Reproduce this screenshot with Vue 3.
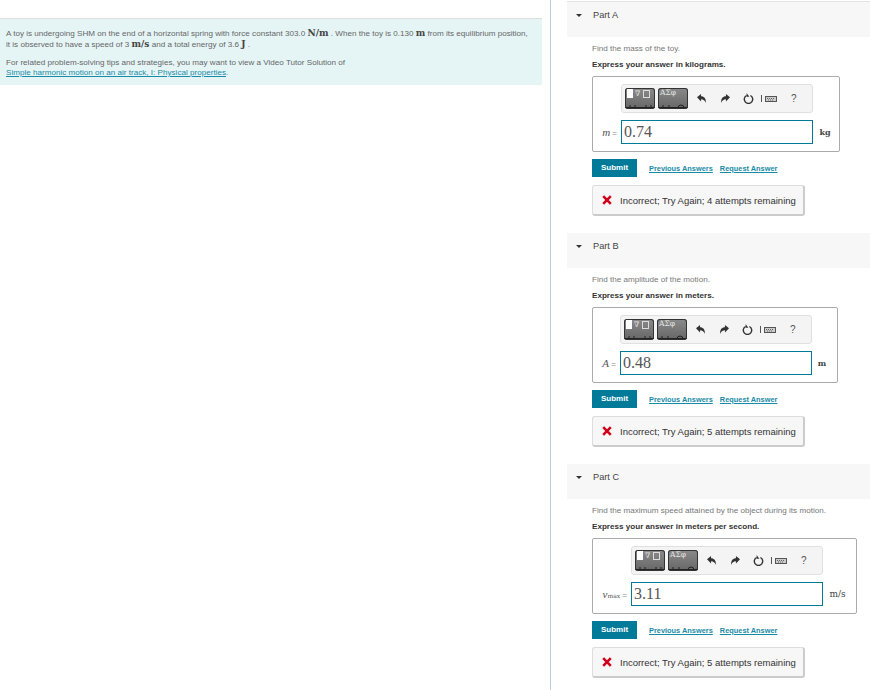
<template>
  <div class="page">
    <div class="left">
      <div class="intro">
        <p class="statement">
          <span class="line">A toy is undergoing SHM on the end of a horizontal spring with force constant 303.0 <b class="unit">N/m</b> . When the toy is 0.130 <b class="unit">m</b> from its equilibrium position,</span>
          <span class="line">it is observed to have a speed of 3 <b class="unit">m/s</b> and a total energy of 3.6 <b class="unit">J</b> .</span>
        </p>
        <p class="related">
          For related problem-solving tips and strategies, you may want to view a Video Tutor Solution of<br />
          <a class="tutor">Simple harmonic motion on an air track, I: Physical properties</a>.
        </p>
      </div>
    </div>

    <div class="right">
      <div class="parts">
        <section v-for="part in parts" :key="part.name" class="part">
          <header class="part-head">
            <span class="caret"></span>
            <span>{{ part.name }}</span>
          </header>
          <div class="part-body">
            <p class="question">{{ part.question }}</p>
            <p class="express">{{ part.express }}</p>

            <div class="answer-box" :class="part.boxClass">
              <div class="answer-grid" :class="part.boxClass">
                <div class="toolbar">
                  <div class="tpl-btn">
                    <svg width="30" height="21" viewBox="0 0 30 21">
                      <rect x="2" y="1" width="6" height="9" fill="#fff" />
                      <text x="10" y="8" class="tpl-text">∇</text>
                      <rect x="18.500" y="2.500" width="6" height="7" fill="none" stroke="#ddd" />
                      <path d="M0 19.500h30M5 17v3M10 17v3M21 17v3M26 17v3" stroke="#222" fill="none" />
                    </svg>
                  </div>
                  <div class="tpl-btn">
                    <svg width="30" height="21" viewBox="0 0 30 21">
                      <text x="2" y="7" class="tpl-text">ΑΣφ</text>
                      <path d="M0 19.500h30M5 17v3M11 17v3M20 20a3 3 0 0 1 6 0" stroke="#222" fill="none" />
                    </svg>
                  </div>
                  <svg class="tool tool-undo" width="9" height="9" viewBox="0 0 10 10">
                    <path d="M0 3.600 4.500 0v2.400c3.400 0 5.500 2.200 5.500 7.600C8.800 7 7 5.800 4.500 5.800v2.400z" fill="#333" />
                  </svg>
                  <svg class="tool tool-redo" width="9" height="9" viewBox="0 0 10 10">
                    <path d="M10 3.600 5.500 0v2.400C2.100 2.400 0 4.600 0 10 1.200 7 3 5.800 5.500 5.800v2.400z" fill="#333" />
                  </svg>
                  <svg class="tool tool-reset" width="11" height="11" viewBox="0 0 11 11">
                    <path d="M7.400 2.500a4.200 4.200 0 1 1-3.800 0" fill="none" stroke="#333" stroke-width="1.400" />
                    <path d="M3.600 0v3.800H6.400z" fill="#333" />
                  </svg>
                  <span class="sep"></span>
                  <svg class="tool tool-keys" width="12" height="6" viewBox="0 0 12 6">
                    <rect x=".5" y=".5" width="11" height="5" fill="#ccc" stroke="#555" />
                    <path d="M2 2.500h8M3 4h6" stroke="#666" stroke-dasharray="1 1" />
                  </svg>
                  <span class="help">?</span>
                </div>
                <div class="label"><i class="symbol">{{ part.symbol }}</i><span v-if="part.sub" class="sub">{{ part.sub }}</span> =</div>
                <div class="input">{{ part.value }}</div>
                <div class="units">{{ part.units }}</div>
              </div>
            </div>

            <div class="actions">
              <button class="submit">Submit</button>
              <a class="link first">Previous Answers</a>
              <a class="link">Request Answer</a>
            </div>

            <div class="feedback">
              <svg class="cross" width="10" height="10" viewBox="0 0 10 10">
                <path d="M1.200 1.200 8.800 8.800M8.800 1.200 1.200 8.800" stroke="#d0021b" stroke-width="2.600" />
              </svg>
              <span>Incorrect; Try Again; {{ part.attempts }} attempts remaining</span>
            </div>
          </div>
        </section>
      </div>
    </div>
  </div>
</template>

<script setup>
const parts = [
  {
    name: 'Part A',
    question: 'Find the mass of the toy.',
    express: 'Express your answer in kilograms.',
    symbol: 'm',
    value: '0.74',
    units: 'kg',
    attempts: 4,
    boxClass: 'box-a'
  },
  {
    name: 'Part B',
    question: 'Find the amplitude of the motion.',
    express: 'Express your answer in meters.',
    symbol: 'A',
    value: '0.48',
    units: 'm',
    attempts: 5,
    boxClass: 'box-b'
  },
  {
    name: 'Part C',
    question: 'Find the maximum speed attained by the object during its motion.',
    express: 'Express your answer in meters per second.',
    symbol: 'v',
    sub: 'max',
    value: '3.11',
    units: 'm/s',
    attempts: 5,
    boxClass: 'box-c'
  }
]
</script>

<style scoped>
.page { display: flex; width: 870px; height: 690px; overflow: hidden; font-family: "Liberation Sans", Arial, sans-serif; background: #fff; color: #333; }
.left { width: 551px; flex: none; box-sizing: border-box; height: 690px; border-right: 1px solid #b9ccdf; padding-top: 18px; }
.intro { width: 542px; height: 67px; box-sizing: border-box; border-top: 1px solid #ddd; background: #e5f5f6; padding: 9px 6px 0; font-size: 8.100px; color: #666; }
.statement { margin: 0; line-height: 11px; }
.line { display: block; white-space: nowrap; }
.unit { font-family: "DejaVu Serif", serif; font-size: 9px; line-height: 9px; color: #444; }
.related { margin: 8px 0 0; line-height: 10px; }
.tutor { color: #1a8ba6; text-decoration: underline; }

.right { flex: 1; padding: 1px 0 0 16px; }
.parts { border-top: 1px solid #e4e4e4; }
.part { height: 231px; }
.part-head { height: 35px; background: #f7f7f7; display: flex; align-items: flex-start; padding-top: 8px; box-sizing: border-box; font-size: 9.200px; line-height: 11px; color: #444; }
.caret { width: 0; height: 0; border-left: 3px solid transparent; border-right: 3px solid transparent; border-top: 3px solid #333; margin: 4px 11px 0 9px; }
.part-body { padding: 7px 0 0 25px; }
.question { margin: 0; font-size: 8.100px; line-height: 10px; color: #777; }
.express { margin: 6px 0 0; font-size: 8.100px; line-height: 10px; color: #333; font-weight: bold; }

.answer-box { box-sizing: border-box; height: 76px; margin-top: 6px; border: 1px solid #aaa; border-radius: 2px; background: #fff; }
.answer-box.box-a { width: 248px; }
.answer-box.box-b { width: 246px; }
.answer-box.box-c { width: 265px; }
.answer-grid { display: grid; grid-template-rows: 29px 24px; row-gap: 7px; padding-top: 7px; align-items: center; }
.answer-grid.box-a { grid-template-columns: 28px 192px 24px; }
.answer-grid.box-b { grid-template-columns: 27px 192px 20px; }
.answer-grid.box-c { grid-template-columns: 38px 192px 29px; }

.toolbar { grid-column: 2; grid-row: 1; height: 29px; box-sizing: border-box; background: #f4f4f4; border: 1px solid #e0e0e0; border-radius: 3px; display: flex; align-items: center; padding-left: 3px; }
.tpl-btn { width: 30px; height: 21px; margin-right: 3px; background: linear-gradient(#8a8a8a, #666); border-radius: 3px; box-shadow: inset 0 0 0 1px #333; overflow: hidden; flex: none; }
.tpl-btn svg { display: block; }
.tpl-text { font-family: "DejaVu Serif", serif; font-size: 7.500px; fill: #e4e4e4; }
.tool { flex: none; }
.tool-undo { margin-left: 6px; }
.tool-redo { margin-left: 15px; }
.tool-reset { margin-left: 13px; }
.tool-keys { margin-left: 3px; }
.sep { width: 1px; height: 7px; background: #555; margin-left: 7px; flex: none; }
.help { margin-left: 14px; font-size: 10px; color: #555; }

.label { grid-column: 1; grid-row: 2; text-align: right; padding-right: 4px; font-size: 8px; color: #888; white-space: nowrap; }
.symbol { font-family: "Liberation Serif", serif; font-size: 11px; color: #555; }
.sub { font-family: "DejaVu Serif", serif; font-size: 6px; color: #555; }
.input { grid-column: 2; grid-row: 2; height: 24px; box-sizing: border-box; border: 1px solid #007a99; padding-left: 2px; font-family: "Liberation Serif", serif; font-size: 16px; line-height: 22px; color: #555; }
.units { grid-column: 3; grid-row: 2; text-align: center; font-family: "DejaVu Serif", serif; font-size: 8px; font-weight: bold; color: #444; }
.answer-grid.box-c .units { font-weight: normal; font-size: 9px; }

.actions { display: flex; align-items: center; margin-top: 7px; height: 18px; }
.submit { width: 45px; height: 18px; padding: 0 0 1px; border: none; background: #007a99; color: #fff; font-family: inherit; font-size: 8px; font-weight: bold; }
.link { font-size: 7.400px; font-weight: bold; color: #1a8ba6; text-decoration: underline; margin-left: 7px; }
.link.first { margin-left: 12px; }

.feedback { display: flex; align-items: center; box-sizing: border-box; width: 213px; height: 31px; margin-top: 8px; background: #f7f7f7; border: 1px solid #ddd; border-right: 2px solid #ccc; border-bottom: 2px solid #ccc; border-radius: 3px; font-size: 9.500px; color: #333; padding-left: 9px; }
.cross { margin-right: 8px; flex: none; }
</style>
